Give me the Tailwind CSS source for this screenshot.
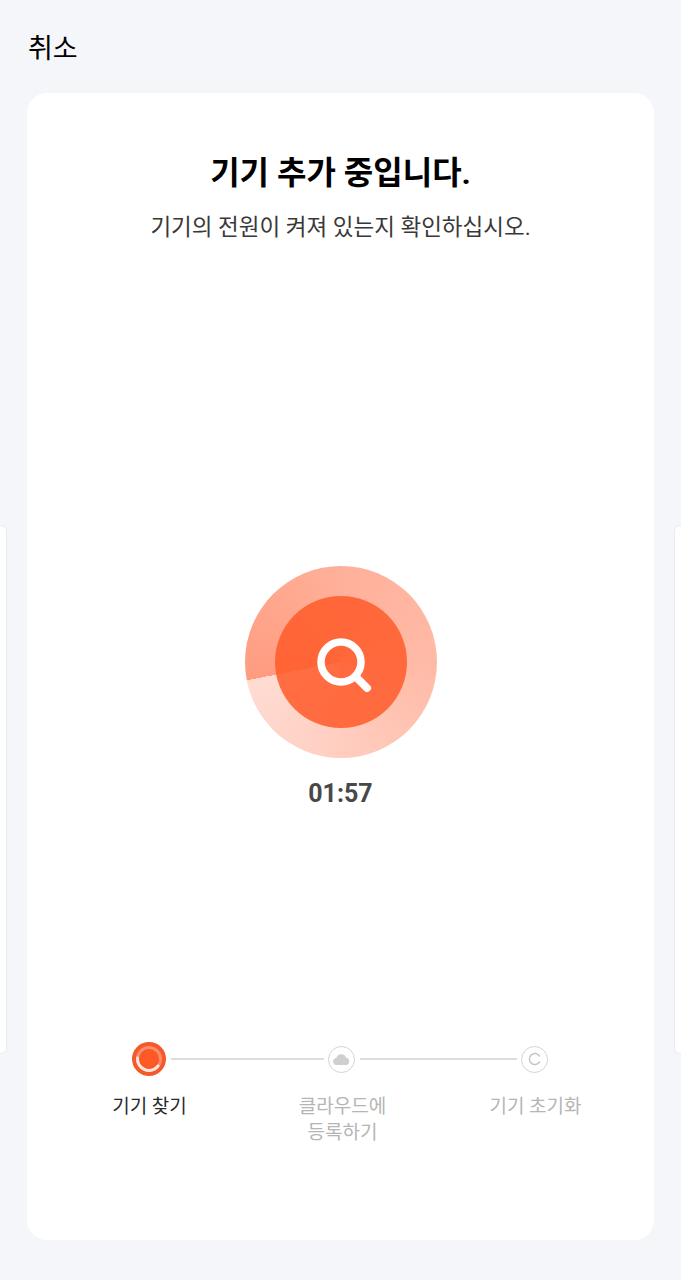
<!DOCTYPE html>
<html lang="ko">
<head>
  <meta charset="UTF-8" />
  <meta name="viewport" content="width=device-width, initial-scale=1.0" />
  <title>기기 추가</title>
  <script src="https://cdn.jsdelivr.net/npm/@tailwindcss/browser@4"></script>
</head>
<body class="bg-[#f5f6fa] font-['Roboto','Noto_Sans_CJK_KR',sans-serif]">
  <div class="relative h-[1280px] w-[681px] overflow-hidden">
    <!-- neighbouring pages peeking in -->
    <div class="absolute left-[-8px] top-[525px] h-[529px] w-[15px] rounded-md border border-[#e9ebf0] bg-white"></div>
    <div class="absolute right-[-8px] top-[525px] h-[529px] w-[15px] rounded-md border border-[#e9ebf0] bg-white"></div>

    <!-- Header -->
    <div class="h-[93px] pl-[28px] pt-[30px] text-[27px] leading-[39px] text-black">취소</div>

    <!-- Card -->
    <div class="relative ml-[27px] flex h-[1147px] w-[627px] flex-col items-center rounded-[20px] bg-white">
      <h1 class="mt-[60px] text-[32px] leading-[40px] font-bold text-black">기기 추가 중입니다.</h1>
      <p class="mt-[19px] text-[22.5px] leading-[30px] text-[#383838]">기기의 전원이 켜져 있는지 확인하십시오.</p>

      <!-- Progress dial -->
      <div class="mt-[324px] flex size-[192px] items-center justify-center rounded-full bg-[conic-gradient(from_259deg,#ff9c80,#ffb09a_28%,#ffbba8_55%,#ffcfc2_80%,#ffdcd2)]">
        <div class="flex size-[132px] items-center justify-center rounded-full bg-[conic-gradient(from_259deg,#ff6435,#ff683b_40%,#ff6d42)]">
          <svg class="size-[64px]" viewBox="0 0 64 64" fill="none" stroke="white" stroke-linecap="round">
            <circle cx="32" cy="32" r="20" stroke-width="7.5" />
            <path d="M47 47 L58 58" stroke-width="8" />
          </svg>
        </div>
      </div>
      <div class="mt-[18px] text-[25px] leading-[36px] font-bold text-[#484848]">01:57</div>

      <!-- Steps -->
      <div class="mt-[230px] flex w-full items-center pl-[105px]">
        <svg class="size-[34px] shrink-0" viewBox="0 0 34 34" fill="none">
          <circle cx="17" cy="17" r="17" fill="#f4592a" />
          <circle cx="17" cy="17" r="11.5" stroke="#ff8c69" stroke-width="3" />
          <path d="M5.5 16 A11.5 11.5 0 0 0 26 24" stroke="#ffe6df" stroke-width="3" stroke-linecap="round" />
          <circle cx="17" cy="17" r="8.5" fill="#ff5a26" />
        </svg>
        <div class="ml-[5px] h-[2px] w-[153px] bg-[#dddddd]"></div>
        <div class="ml-[4px] flex size-[27px] shrink-0 items-center justify-center rounded-full border border-[#d4d4d4]">
          <svg class="w-[17px]" viewBox="0 0 17 12" fill="#cfcfcf">
            <path d="M4 12 A3.5 3.5 0 0 1 3.4 5 A5 5 0 0 1 13 4.6 A3.8 3.8 0 0 1 13.5 12 Z" />
          </svg>
        </div>
        <div class="ml-[5px] h-[2px] w-[157px] bg-[#dddddd]"></div>
        <div class="ml-[4px] flex size-[27px] shrink-0 items-center justify-center rounded-full border border-[#d4d4d4]">
          <svg class="size-[14px]" viewBox="0 0 14 14" fill="none" stroke="#c4c4c4" stroke-width="1.4" stroke-linecap="round">
            <path d="M11.5 4 A5.5 5.5 0 1 0 11.5 10" />
          </svg>
        </div>
      </div>
      <div class="mt-[18px] ml-[4px] grid w-[579px] grid-cols-3 text-center text-[19px] leading-[26px] text-[#b5b5b5]">
        <div class="text-[#2a2a2a]">기기 찾기</div>
        <div>클라우드에<br />등록하기</div>
        <div>기기 초기화</div>
      </div>
    </div>
  </div>
</body>
</html>
